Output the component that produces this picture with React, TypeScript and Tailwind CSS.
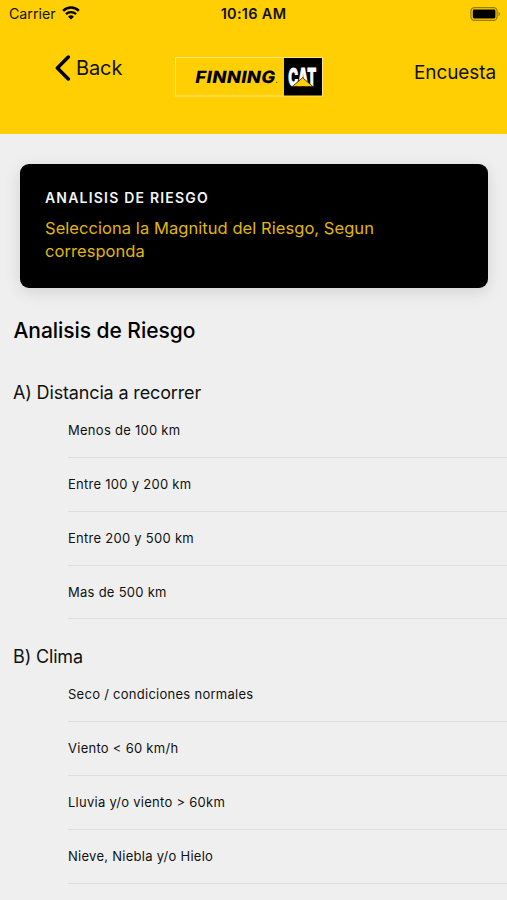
interface RiskSection {
  title: string;
  options: string[];
}

const sections: RiskSection[] = [
  {
    title: 'A) Distancia a recorrer',
    options: ['Menos de 100 km', 'Entre 100 y 200 km', 'Entre 200 y 500 km', 'Mas de 500 km'],
  },
  {
    title: 'B) Clima',
    options: [
      'Seco / condiciones normales',
      'Viento < 60 km/h',
      'Lluvia y/o viento > 60km',
      'Nieve, Niebla y/o Hielo',
    ],
  },
];

function WifiIcon() {
  return (
    <svg width="18" height="14" viewBox="0 0 19 14" fill="none" stroke="#000">
      <path d="M1.2 4.7a11.8 11.8 0 0 1 16.6 0" strokeWidth="2.7" />
      <path d="M4.2 8.2a7.5 7.5 0 0 1 10.6 0" strokeWidth="2.4" />
      <path d="M9.5 13.9 6.4 10.9a4.4 4.4 0 0 1 6.2 0z" fill="#000" stroke="none" />
    </svg>
  );
}

function BatteryIcon() {
  return (
    <svg width="31" height="14" viewBox="0 0 31 14">
      <rect x="0.9" y="0.7" width="26.2" height="12.6" rx="3.6" fill="none" stroke="#000" strokeOpacity="0.4" strokeWidth="1.2" />
      <rect x="2.8" y="2.6" width="22.6" height="8.8" rx="1.4" fill="#000" />
      <path d="M28.6 4.8c1.7.7 1.7 3.7 0 4.4z" fill="#000" fillOpacity="0.45" />
    </svg>
  );
}

function BackIcon() {
  return (
    <svg width="16" height="26" viewBox="0 0 16 26" fill="none">
      <path d="M13.3 2 2.4 13l10.9 11" stroke="#000" strokeWidth="3.5" strokeLinecap="round" strokeLinejoin="round" />
    </svg>
  );
}

function Logo() {
  return (
    <svg width="148" height="40" viewBox="0 0 148 40">
      <rect x="0.5" y="0.5" width="147" height="38.5" fill="#FFCF03" stroke="#FFE77A" />
      <text
        transform="translate(19.6 25.6) skewX(-10) scale(1.08 1)"
        className="font-['Inter'] text-[17px] font-extrabold tracking-[0.4px]"
      >
        FINNING
      </text>
      <circle cx="101.8" cy="25.2" r="0.5" />
      <rect x="109" y="1" width="38" height="37.5" />
      <text
        transform="translate(113.2 28.8) scale(0.53 1)"
        fill="#fff"
        stroke="#fff"
        strokeWidth="1.1"
        className="font-['Inter'] text-[25px] font-extrabold tracking-[0.6px]"
      >
        CAT
      </text>
      <path d="M127.6 20.8 138 29.6h-20.8z" fill="#FFCF03" stroke="#000" strokeWidth="0.7" />
    </svg>
  );
}

function Header() {
  return (
    <header className="h-[134px] bg-[#FFCF03]">
      <div className="grid h-[27px] grid-cols-3 items-center pl-[9px] pr-[6px]">
        <div className="flex items-center gap-[6px]">
          <span className="text-[14.2px]">Carrier</span>
          <WifiIcon />
        </div>
        <span className="-ml-[3px] text-center text-[14.5px] font-semibold tracking-[0.3px]">10:16 AM</span>
        <div className="flex justify-end">
          <BatteryIcon />
        </div>
      </div>
      <div className="flex pl-[55px] pr-[11px] pt-[28px]">
        <button className="flex h-[26px] w-[120px] items-center gap-[5px]">
          <BackIcon />
          <span className="text-[20px] tracking-[-0.1px]">Back</span>
        </button>
        <div className="mt-[2px]">
          <Logo />
        </div>
        <span className="ml-auto mt-[3px] text-[19px] leading-[30px] tracking-[-0.1px]">Encuesta</span>
      </div>
    </header>
  );
}

function Section({ title, options }: RiskSection) {
  return (
    <section>
      <h3 className="h-[49px] pl-[13px] pt-[24px] text-[18px] leading-[28px] tracking-[-0.15px]">{title}</h3>
      <ul className="pl-[68px]">
        {options.map((option) => (
          <li
            key={option}
            className="flex h-[53.8px] items-center border-b border-[#dedede] pt-[0.5px] text-[13px] tracking-[0.27px]"
          >
            {option}
          </li>
        ))}
      </ul>
    </section>
  );
}

export default function App() {
  return (
    <div className="h-[900px] overflow-hidden bg-[#efefef] font-['Inter',sans-serif] text-[#111]">
      <Header />
      <main>
        <div className="ml-[20.4px] mr-[19.4px] mt-[29.5px] h-[124.5px] rounded-[9px] bg-black px-[24.6px] pt-[24px] shadow-[0_4px_16px_rgba(0,0,0,0.12)]">
          <h1 className="text-[14px] font-semibold leading-[20px] tracking-[1.2px] text-[#f4f4f4]">
            ANALISIS DE RIESGO
          </h1>
          <p className="mt-[9px] text-[16.5px] leading-[23.5px] tracking-[0.06px] text-[#e0b610]">
            Selecciona la Magnitud del Riesgo, Segun
            <br />
            corresponda
          </p>
        </div>
        <h2 className="h-[67.3px] pl-[13.5px] pt-[27px] text-[21px] font-medium leading-[32px] tracking-[-0.05px] text-black">
          Analisis de Riesgo
        </h2>
        {sections.map((section) => (
          <Section key={section.title} {...section} />
        ))}
      </main>
    </div>
  );
}
